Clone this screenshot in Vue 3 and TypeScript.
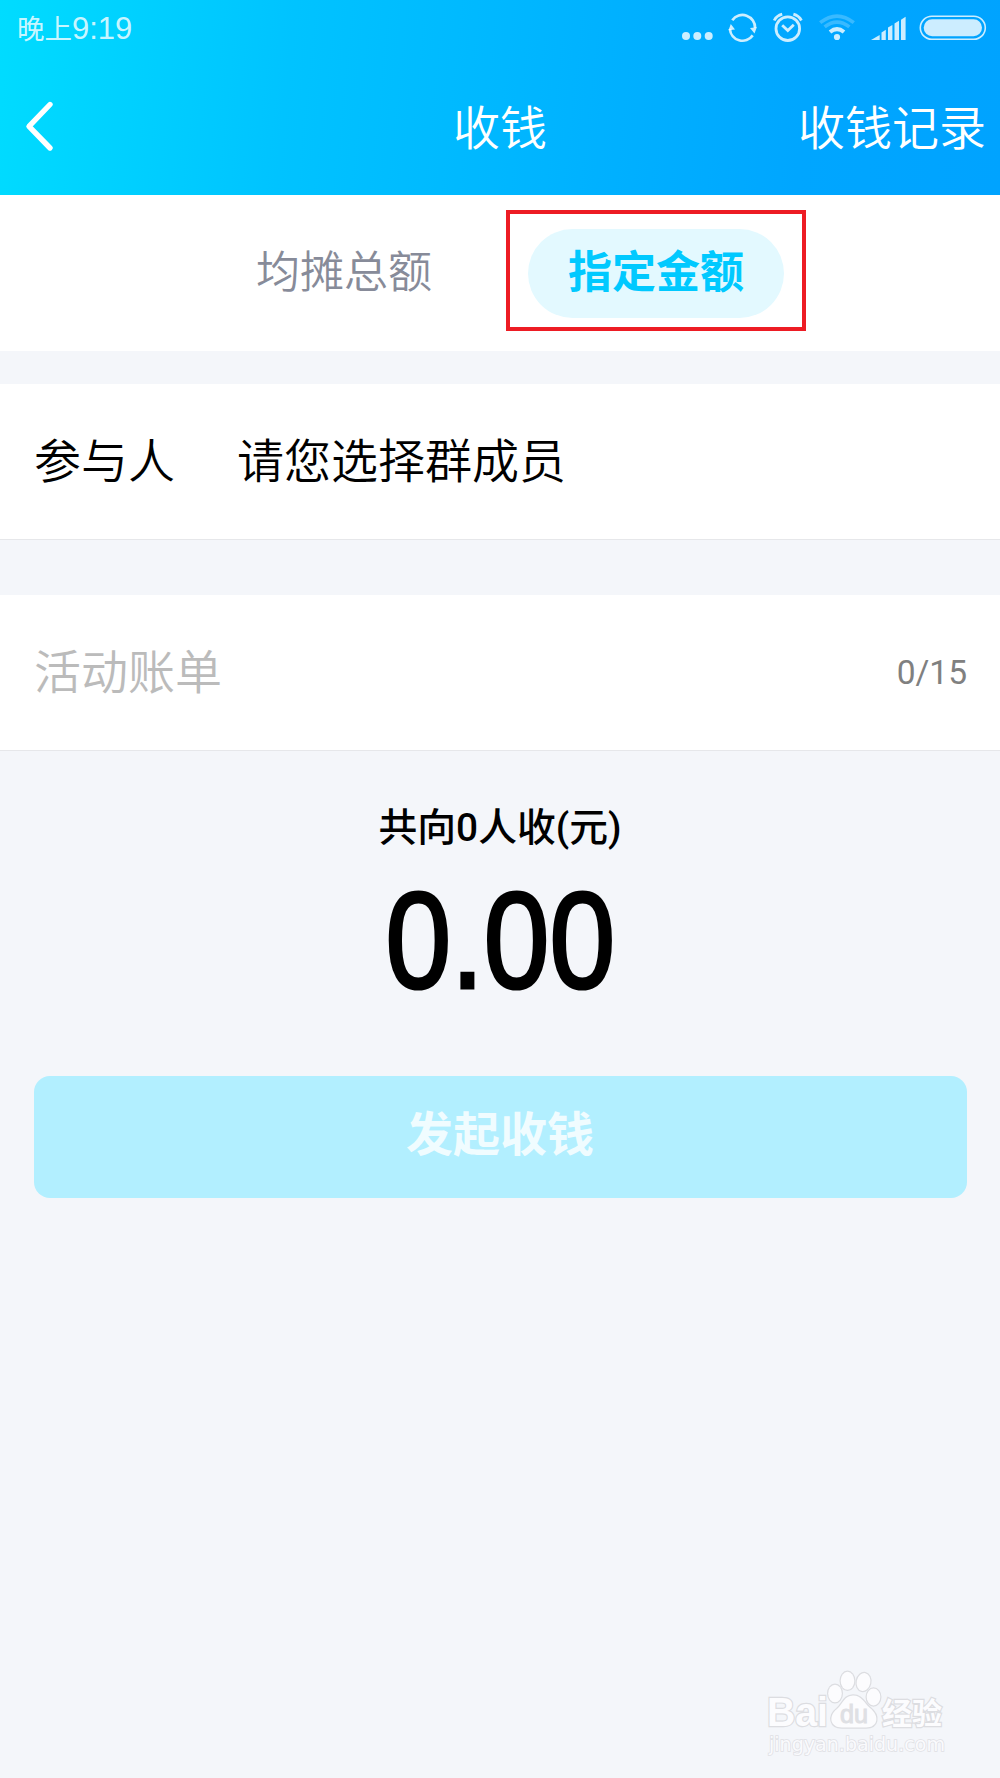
<script setup lang="ts">
import { ref } from 'vue'

const tabs = ['均摊总额', '指定金额']
const active = ref(1)
const total = '0.00'
const signalBars = [
  'M0 40 L8.7 35 V40Z',
  'M10.5 40 V32.5 L14.8 29.8 V40Z',
  'M17 40 V27.5 L21.4 24.9 V40Z',
  'M23.5 40 V23.5 L28 20.7 V40Z',
  'M30 40 V19.7 L34.6 16.8 V40Z',
]
</script>

<template>
  <div class="page">
    <header class="header">
      <div class="status">
        <span class="time">晚上<b>9:19</b></span>
        <div class="icons">
          <svg width="40" height="50" viewBox="0 0 40 50" fill="currentColor">
            <circle cx="6" cy="36" r="4" /><circle cx="17.3" cy="36" r="4" /><circle cx="28.7" cy="36" r="4" />
          </svg>
          <svg width="45" height="50" viewBox="0 0 45 50" fill="none" stroke="currentColor" stroke-width="2.7">
            <path d="M12.3 20.2 A12.6 12.6 0 0 1 35.1 28" />
            <path d="M32.7 35.4 A12.6 12.6 0 0 1 9.9 29" />
            <path d="M30 28 L36.8 27.3 L34.5 33.5Z M8.5 30.3 L10.8 24 L15 29.5Z" fill="currentColor" stroke="none" />
          </svg>
          <svg width="47" height="50" viewBox="0 0 47 50" fill="none" stroke="currentColor" stroke-width="2.8">
            <circle cx="22.8" cy="28.7" r="11.8" />
            <path d="M17.2 25.2 L22.8 30.5 L28.8 24.8" />
            <path d="M9.2 20.5 Q11.5 15.8 17.2 14.2" /><path d="M36.4 20.5 Q34 15.8 28.4 14.2" />
          </svg>
          <svg width="50" height="50" viewBox="0 0 50 50" fill="none" stroke="currentColor">
            <circle cx="25" cy="37" r="3.1" fill="currentColor" stroke="none" />
            <path d="M18 32 Q25 26.2 32 32" stroke-width="4" />
            <path d="M12.6 26.9 Q25 17.3 37.4 26.9" stroke-width="3.6" opacity=".28" />
            <path d="M8.2 22.7 Q25 9.4 41.8 22.7" stroke-width="3.6" opacity=".28" />
          </svg>
          <svg width="50" height="50" viewBox="-9 0 50 50" fill="currentColor">
            <path v-for="d in signalBars" :key="d" :d="d" />
          </svg>
          <svg width="88" height="50" viewBox="0 0 88 50">
            <rect x="8.3" y="16.2" width="65" height="23" rx="11.5" fill="none" stroke="currentColor" stroke-width="1.6" />
            <rect x="11.7" y="19.2" width="58.3" height="17" rx="8.5" fill="currentColor" />
          </svg>
        </div>
      </div>
      <nav class="nav">
        <svg width="60" height="60" viewBox="0 0 60 60" fill="none" stroke="#fff" stroke-width="5.4" stroke-linecap="round" stroke-linejoin="round">
          <path d="M50 8.5 L29 30.4 L50 52" />
        </svg>
        <h1>收钱</h1>
        <a class="history">收钱记录</a>
      </nav>
    </header>

    <section class="tabs">
      <div v-for="(tab, i) in tabs" :key="tab" :class="['frame', { marked: i === active }]">
        <button :class="['tab', { active: i === active }]" @click="active = i">{{ tab }}</button>
      </div>
    </section>

    <section class="row members">
      <span class="label">参与人</span>
      <span class="value">请您选择群成员</span>
    </section>

    <section class="row bill">
      <span class="placeholder">活动账单</span>
      <span class="count">0/15</span>
    </section>

    <section class="summary">
      <p class="caption">共向0人收(元)</p>
      <p class="total"><span>{{ total }}</span></p>
    </section>

    <button class="submit">发起收钱</button>

    <svg class="watermark" width="190" height="96" viewBox="0 0 190 96">
      <g class="outlined">
        <text x="2" y="54" font-size="40" font-weight="700" textLength="61" lengthAdjust="spacingAndGlyphs">Bai</text>
        <ellipse cx="70" cy="21.5" rx="6.8" ry="8.8" />
        <ellipse cx="82.5" cy="8.8" rx="6.8" ry="9" />
        <ellipse cx="98.5" cy="10" rx="6.8" ry="9" transform="rotate(12 98.5 10)" />
        <ellipse cx="108.5" cy="25" rx="6.8" ry="8.5" />
        <path d="M88 23.5 C97 23.5 99 31 105 36 C115 44 113 55.5 101 55.5 H77 C65 55.5 63 44 72 37 C78 32 79 23.5 88 23.5Z" />
        <text x="117" y="52" font-size="30" font-weight="700" class="cjk">经验</text>
      </g>
      <text x="75" y="51" font-size="25" textLength="28" lengthAdjust="spacingAndGlyphs" class="du">du</text>
      <text x="4" y="79" font-size="19" textLength="176" lengthAdjust="spacingAndGlyphs" class="url">jingyan.baidu.com</text>
    </svg>
  </div>
</template>

<style>
body {
  background: #f4f6fa;
}
</style>

<style scoped>
.page {
  position: relative;
  width: 1000px;
  height: 1778px;
  overflow: hidden;
  background: #f4f6fa;
  color: #000;
  font-family: Roboto, "Noto Sans CJK SC", sans-serif;
  font-size: 47px;
  font-weight: 350;
}
h1, p {
  margin: 0;
  font-weight: inherit;
}
button {
  border: 0;
  padding: 0;
  font-family: inherit;
}
.header {
  height: 195px;
  background: linear-gradient(96deg, #00dcff 0%, #00cfff 15%, #00c3ff 29%, #00baff 45%, #00b0ff 62%, #00a6ff 80%, #00a3ff 100%);
  color: #fff;
}
.status {
  display: flex;
  justify-content: space-between;
  height: 57px;
  color: rgba(255, 255, 255, 0.8);
}
.time {
  padding-left: 17px;
  font-size: 27.5px;
  line-height: 58px;
  font-weight: 400;
}
.time b {
  font-family: "Liberation Sans", sans-serif;
  font-size: 31px;
  font-weight: 400;
}
.icons {
  display: flex;
}
.nav {
  display: grid;
  grid-template-columns: 1fr auto 1fr;
  align-items: center;
  height: 138px;
}
h1, .history {
  padding-top: 6px;
  font-size: 47px;
  line-height: 60px;
}
.history {
  justify-self: end;
  padding-right: 14px;
}
.tabs {
  display: flex;
  gap: 12px;
  height: 141px;
  padding: 15px 0 0 194px;
  background: #fff;
}
.frame {
  box-sizing: border-box;
  width: 300px;
  height: 121px;
  padding: 15px 18px;
  border: 4px solid transparent;
}
.frame.marked {
  border-color: #ed1c24;
}
.tab {
  box-sizing: border-box;
  width: 256px;
  height: 89px;
  border-radius: 45px;
  background: none;
  color: #878b99;
  font-size: 44px;
  font-weight: 350;
  line-height: 89px;
}
.tab.active {
  background: #e3f9ff;
  color: #00c9ff;
  font-weight: 700;
}
.row {
  box-sizing: border-box;
  display: flex;
  align-items: center;
  height: 156px;
  padding: 0 33px 0 34px;
  border-bottom: 1px solid #e6e7ea;
  background: #fff;
}
.members {
  margin-top: 33px;
}
.label {
  width: 203px;
}
.label, .value, .placeholder {
  padding-bottom: 9px;
}
.bill {
  margin-top: 55px;
  justify-content: space-between;
}
.placeholder {
  color: #bbb;
}
.count {
  color: #808080;
  font-size: 33.5px;
  font-weight: 400;
}
.summary {
  height: 325px;
  padding-top: 49px;
  box-sizing: border-box;
  text-align: center;
}
.caption {
  font-size: 38.8px;
  line-height: 56px;
  font-weight: 500;
}
.total {
  font-family: "Liberation Sans", sans-serif;
  font-size: 138px;
  line-height: 168px;
  font-weight: 400;
}
.total span {
  display: inline-block;
  transform: scaleX(0.855);
  -webkit-text-stroke: 3.2px #000;
}
.submit {
  display: block;
  box-sizing: border-box;
  width: 933px;
  height: 122px;
  margin: 0 33.5px;
  padding-bottom: 4px;
  border-radius: 16px;
  background: #b2efff;
  color: #f0fcff;
  font-size: 47px;
  font-weight: 700;
  line-height: 118px;
}
.watermark {
  position: absolute;
  left: 765px;
  top: 1672px;
  overflow: visible;
  font-family: "Liberation Sans", sans-serif;
}
.outlined {
  fill: #fcfcfe;
  stroke: #dcdde1;
  stroke-width: 2.4px;
  paint-order: stroke;
}
.cjk {
  font-family: "Noto Sans CJK SC", sans-serif;
}
.du {
  fill: #dfe0e4;
  stroke: #dfe0e4;
  stroke-width: 1px;
}
.url {
  font-family: "DejaVu Sans", sans-serif;
  font-weight: 400;
  fill: #fafafd;
  stroke: #dfe0e4;
  stroke-width: 1.5px;
  paint-order: stroke;
}
</style>
